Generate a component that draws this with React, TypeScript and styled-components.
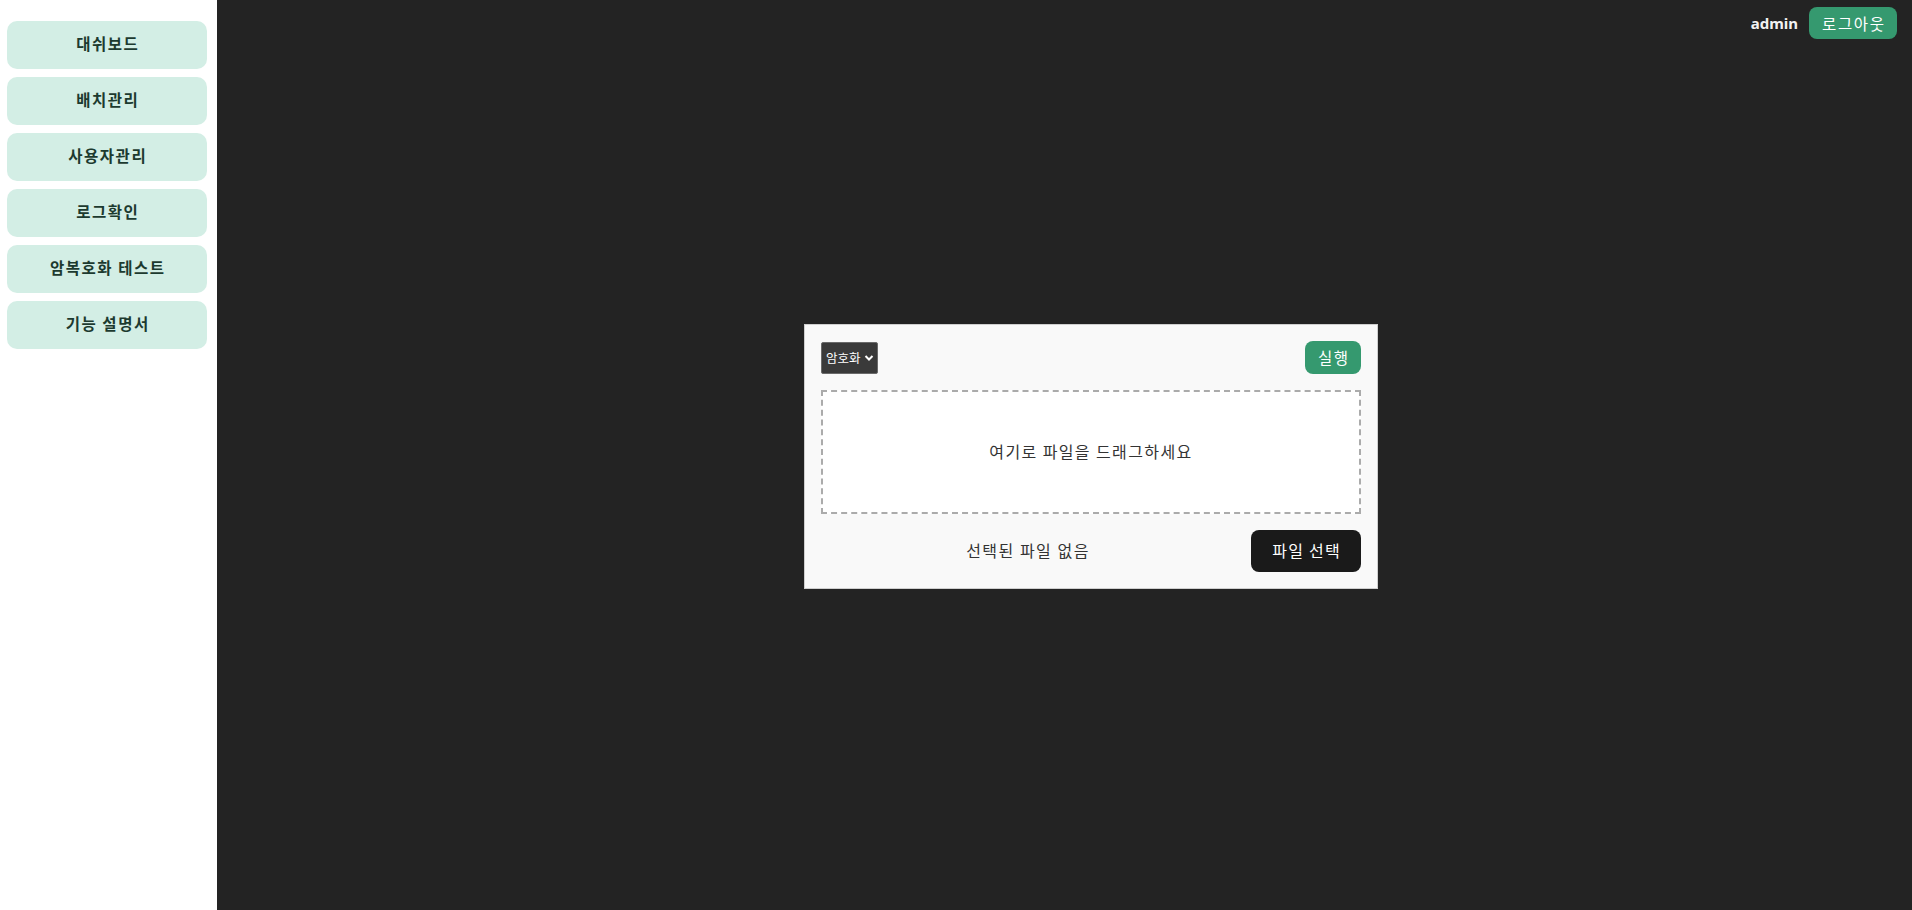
import React, { useState } from "react";
import styled, { createGlobalStyle } from "styled-components";

const GlobalStyle = createGlobalStyle`
  * { box-sizing: border-box; }
  html, body { margin: 0; padding: 0; height: 100%; overflow: hidden; }
  body {
    font-family: "Noto Sans", "Noto Sans CJK KR", sans-serif;
    background: #232323;
  }
  #root { height: 100vh; }
`;

const Layout = styled.div`
  display: flex;
  height: 100vh;
`;

const Sidebar = styled.nav`
  width: 217px;
  flex-shrink: 0;
  background: #ffffff;
  display: flex;
  flex-direction: column;
  gap: 8px;
  padding: 21px 10px 0 7px;
`;

const NavButton = styled.button`
  height: 48px;
  width: 200px;
  border: none;
  border-radius: 10px;
  background: #d3eee5;
  color: #1c3a2f;
  font-family: "Noto Sans CJK KR", sans-serif;
  font-size: 15.5px;
  font-weight: 700;
  letter-spacing: 1.5px;
  line-height: 1;
  cursor: pointer;
  padding: 0 0 2px 1.5px;
`;

const Main = styled.main`
  flex: 1;
  display: grid;
  grid-template: 1fr / 1fr;
  background: #232323;
  height: 100vh;
`;

const TopBar = styled.header`
  grid-area: 1 / 1;
  align-self: start;
  justify-self: end;
  display: flex;
  align-items: center;
  gap: 11px;
  padding: 7px 15px 0 0;
`;

const UserName = styled.span`
  color: #f2f2f2;
  font-family: "Noto Sans", sans-serif;
  font-weight: 700;
  font-size: 15px;
`;

const GreenButton = styled.button<{ $w?: number; $h?: number }>`
  background: #35996f;
  color: #ffffff;
  border: none;
  border-radius: 8px;
  font-family: "Noto Sans CJK KR", sans-serif;
  font-size: 15.5px;
  letter-spacing: 1.6px;
  height: ${(p) => p.$h ?? 32}px;
  width: ${(p) => p.$w ?? 88}px;
  padding: 0 0 1px 1.6px;
  display: flex;
  align-items: center;
  justify-content: center;
  cursor: pointer;
`;

const Stage = styled.div`
  grid-area: 1 / 1;
  align-self: center;
  justify-self: center;
  padding: 3px 0 0 53px;
`;

const Panel = styled.section`
  width: 574px;
  background: #f9f9f9;
  border: 1px solid #cfcfcf;
  padding: 16px;
  display: flex;
  flex-direction: column;
  gap: 16px;
`;

const Row = styled.div`
  display: flex;
  align-items: center;
  justify-content: space-between;
  gap: 16px;
`;

const SelectWrap = styled.div`
  position: relative;
  width: 57px;
  height: 32px;
`;

const ModeSelect = styled.select`
  appearance: none;
  -webkit-appearance: none;
  width: 100%;
  height: 100%;
  background: #3a3a3a;
  color: #ffffff;
  border: 1px solid #6a6a6a;
  border-radius: 2px;
  font-family: "Noto Sans CJK KR", sans-serif;
  font-size: 12.5px;
  padding: 0 0 1px 4px;
  outline: none;
`;

const Chevron = styled.svg`
  position: absolute;
  right: 4px;
  top: 50%;
  transform: translateY(-50%);
  pointer-events: none;
`;

const DropZone = styled.div`
  height: 124px;
  border: 2px dashed #ababab;
  background: #ffffff;
  display: flex;
  align-items: center;
  justify-content: center;
  color: #333333;
  font-family: "Noto Sans CJK KR", sans-serif;
  font-size: 16px;
  letter-spacing: 1.4px;
  padding-bottom: 3px;
`;

const FileName = styled.span`
  flex: 1;
  text-align: center;
  color: #333333;
  font-family: "Noto Sans CJK KR", sans-serif;
  font-size: 16px;
  letter-spacing: 1.5px;
  padding-bottom: 3px;
`;

const DarkButton = styled.button`
  width: 110px;
  height: 42px;
  background: #1a1a1a;
  color: #ffffff;
  border: none;
  border-radius: 8px;
  font-family: "Noto Sans CJK KR", sans-serif;
  font-size: 16px;
  letter-spacing: 1.3px;
  padding: 0 0 2px 1.3px;
  cursor: pointer;
`;

const navItems = ["대쉬보드", "배치관리", "사용자관리", "로그확인", "암복호화 테스트", "기능 설명서"];

export default function App() {
  const [mode, setMode] = useState("encrypt");
  return (
    <>
      <GlobalStyle />
      <Layout>
        <Sidebar>
          {navItems.map((item) => (
            <NavButton key={item}>{item}</NavButton>
          ))}
        </Sidebar>
        <Main>
          <TopBar>
            <UserName>admin</UserName>
            <GreenButton>로그아웃</GreenButton>
          </TopBar>
          <Stage>
            <Panel>
              <Row>
                <SelectWrap>
                  <ModeSelect value={mode} onChange={(e) => setMode(e.target.value)}>
                    <option value="encrypt">암호화</option>
                    <option value="decrypt">복호화</option>
                  </ModeSelect>
                  <Chevron width="10" height="8" viewBox="0 0 10 8">
                    <path d="M1.5 2 L5 5.5 L8.5 2" fill="none" stroke="#ffffff" strokeWidth="2" />
                  </Chevron>
                </SelectWrap>
                <GreenButton $w={56} $h={33}>실행</GreenButton>
              </Row>
              <DropZone>여기로 파일을 드래그하세요</DropZone>
              <Row>
                <FileName>선택된 파일 없음</FileName>
                <DarkButton>파일 선택</DarkButton>
              </Row>
            </Panel>
          </Stage>
        </Main>
      </Layout>
    </>
  );
}
